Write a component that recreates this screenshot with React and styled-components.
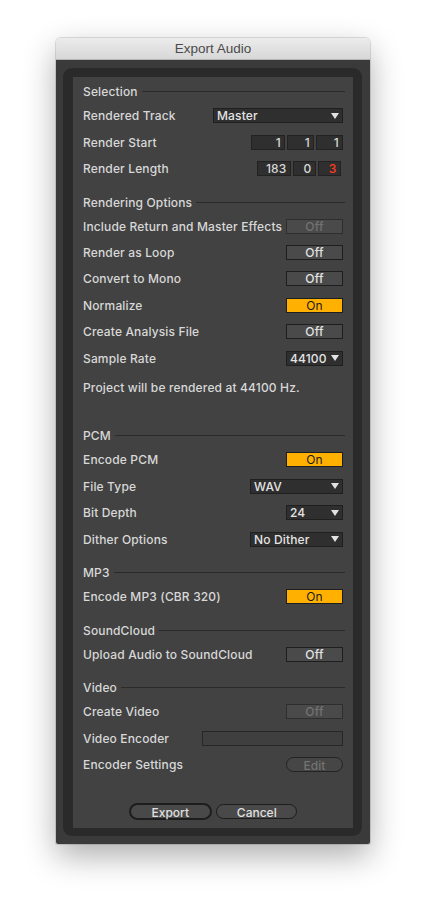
import React from 'react'
import styled, { createGlobalStyle } from 'styled-components'

const GlobalStyle = createGlobalStyle`
  html, body {
    margin: 0;
    background: #ffffff;
  }
  * { box-sizing: border-box; }
`

const ROW = 26.4

const Arrow = () => (
  <svg width="8" height="6" viewBox="0 0 8 6">
    <path d="M0 0 L8 0 L4 6 Z" fill="#e2e2e2" />
  </svg>
)

const Dropdown = ({ width, value }) => (
  <Select $width={width}>
    <span>{value}</span>
    <Arrow />
  </Select>
)

const Header = ({ children }) => (
  <SectionHeader>
    <span>{children}</span>
  </SectionHeader>
)

const App = () => {
  return (
    <>
      <GlobalStyle />
      <Page>
        <Window>
          <TitleBar>Export Audio</TitleBar>
          <Body>
            <Frame>
              <Panel>
                <Section>
                  <Header>Selection</Header>
                  <Row>
                    <Label>Rendered Track</Label>
                    <Dropdown width={130} value="Master" />
                  </Row>
                  <Row>
                    <Label>Render Start</Label>
                    <NumberGroup>
                      <NumberBox $width={34}>1</NumberBox>
                      <NumberBox $width={27}>1</NumberBox>
                      <NumberBox $width={27}>1</NumberBox>
                    </NumberGroup>
                  </Row>
                  <Row>
                    <Label>Render Length</Label>
                    <NumberGroup $offset={2.5}>
                      <NumberBox $width={34}>183</NumberBox>
                      <NumberBox $width={23}>0</NumberBox>
                      <NumberBox $width={23} $red>3</NumberBox>
                    </NumberGroup>
                  </Row>
                </Section>

                <Section>
                  <Header>Rendering Options</Header>
                  <Row>
                    <Label>Include Return and Master Effects</Label>
                    <Toggle $disabled>Off</Toggle>
                  </Row>
                  <Row>
                    <Label>Render as Loop</Label>
                    <Toggle>Off</Toggle>
                  </Row>
                  <Row>
                    <Label>Convert to Mono</Label>
                    <Toggle>Off</Toggle>
                  </Row>
                  <Row>
                    <Label>Normalize</Label>
                    <Toggle $on>On</Toggle>
                  </Row>
                  <Row>
                    <Label>Create Analysis File</Label>
                    <Toggle>Off</Toggle>
                  </Row>
                  <Row>
                    <Label>Sample Rate</Label>
                    <Dropdown width={57} value="44100" />
                  </Row>
                  <Note>Project will be rendered at 44100 Hz.</Note>
                </Section>

                <Section>
                  <Header>PCM</Header>
                  <Row>
                    <Label>Encode PCM</Label>
                    <Toggle $on>On</Toggle>
                  </Row>
                  <Row>
                    <Label>File Type</Label>
                    <Dropdown width={93} value="WAV" />
                  </Row>
                  <Row>
                    <Label>Bit Depth</Label>
                    <Dropdown width={57} value="24" />
                  </Row>
                  <Row>
                    <Label>Dither Options</Label>
                    <Dropdown width={93} value="No Dither" />
                  </Row>
                </Section>

                <Section>
                  <Header>MP3</Header>
                  <Row>
                    <Label>Encode MP3 (CBR 320)</Label>
                    <Toggle $on>On</Toggle>
                  </Row>
                </Section>

                <Section>
                  <Header>SoundCloud</Header>
                  <Row>
                    <Label>Upload Audio to SoundCloud</Label>
                    <Toggle>Off</Toggle>
                  </Row>
                </Section>

                <Section>
                  <Header>Video</Header>
                  <Row>
                    <Label>Create Video</Label>
                    <Toggle $disabled>Off</Toggle>
                  </Row>
                  <Row>
                    <Label>Video Encoder</Label>
                    <Field />
                  </Row>
                  <Row>
                    <Label>Encoder Settings</Label>
                    <PillButton disabled>Edit</PillButton>
                  </Row>
                </Section>

                <ButtonBar>
                  <DialogButton $primary>Export</DialogButton>
                  <DialogButton>Cancel</DialogButton>
                </ButtonBar>
              </Panel>
            </Frame>
          </Body>
        </Window>
      </Page>
    </>
  )
}

export default App

const Page = styled.div`
  padding: 38px 0 60px 56px;
`

const Window = styled.div`
  width: 314px;
  border-radius: 5px 5px 2px 2px;
  overflow: hidden;
  box-shadow: 0 0 0 1px rgba(0, 0, 0, 0.12), 0 12px 32px rgba(0, 0, 0, 0.32);
`

const TitleBar = styled.div`
  height: 22px;
  display: flex;
  align-items: center;
  justify-content: center;
  background: linear-gradient(#ececec, #d7d7d7);
  border-bottom: 1px solid #b4b4b4;
  color: #4b4b4b;
  font-family: "Liberation Sans", Arial, sans-serif;
  font-size: 13.5px;
`

const Body = styled.div`
  background: #3a3a3a;
  padding: 8px 8px 8px 7px;
`

const Frame = styled.div`
  background: #2a2a2a;
  border-radius: 9px;
  padding: 9px 9px 8px 10px;
`

const Panel = styled.div`
  background: #424242;
  padding: 4px 10px 8.5px;
  font-family: "Inter", "Liberation Sans", sans-serif;
  font-size: 12px;
  font-weight: 500;
  letter-spacing: 0.15px;
  color: #d8d8d8;
`

const Section = styled.div`
  margin-bottom: 9.6px;
`

const SectionHeader = styled.div`
  height: 21.6px;
  display: flex;
  align-items: center;
  gap: 4px;

  &::after {
    content: "";
    flex: 1;
    height: 1px;
    margin-right: -2px;
    background: #2a2a2a;
  }
`

const Row = styled.div`
  height: ${ROW}px;
  display: flex;
  align-items: center;
  justify-content: space-between;
`

const Label = styled.span`
  white-space: nowrap;
`

const Select = styled.div`
  width: ${(p) => p.$width}px;
  height: 15px;
  display: flex;
  align-items: center;
  justify-content: space-between;
  padding: 0 3px;
  background: #2f2f2f;
  border: 1px solid #1f1f1f;
  color: #e4e4e4;
`

const NumberGroup = styled.div`
  display: flex;
  gap: 2px;
  margin-right: ${(p) => p.$offset || 0}px;
`

const NumberBox = styled.div`
  width: ${(p) => p.$width}px;
  height: 15px;
  display: flex;
  align-items: center;
  justify-content: flex-end;
  padding-right: 3px;
  background: #2f2f2f;
  border: 1px solid #222;
  color: ${(p) => (p.$red ? '#ff3b1c' : '#d8d8d8')};
`

const Toggle = styled.div`
  width: 57px;
  height: 15px;
  display: flex;
  align-items: center;
  justify-content: center;
  background: ${(p) => (p.$on ? '#ffb000' : '#4a4a4a')};
  border: 1px solid ${(p) => (p.$disabled ? '#2e2e2e' : '#1e1e1e')};
  color: ${(p) => (p.$on ? '#1a1a1a' : p.$disabled ? '#727272' : '#e2e2e2')};
  font-weight: ${(p) => (p.$on ? 400 : 500)};
`

const Note = styled.div`
  height: 16px;
  margin-top: 7.8px;
  display: flex;
  align-items: center;
  margin-bottom: 30px;
`

const Field = styled.div`
  width: 141px;
  height: 15px;
  background: #3f3f3f;
  border: 1px solid #262626;
`

const PillButton = styled.button`
  width: 57px;
  height: 15.5px;
  padding: 0;
  border-radius: 8px;
  background: #464646;
  border: 1px solid #232323;
  color: #737373;
  font: inherit;
`

const ButtonBar = styled.div`
  display: flex;
  justify-content: center;
  align-items: center;
  gap: 4.5px;
  margin-top: 25.2px;
`

const DialogButton = styled.button`
  width: ${(p) => (p.$primary ? 83 : 81)}px;
  height: ${(p) => (p.$primary ? 17 : 15.5)}px;
  padding: 0;
  border-radius: 9px;
  background: #494949;
  border: ${(p) => (p.$primary ? 2 : 1)}px solid #1d1d1d;
  color: #e0e0e0;
  font: inherit;
`
